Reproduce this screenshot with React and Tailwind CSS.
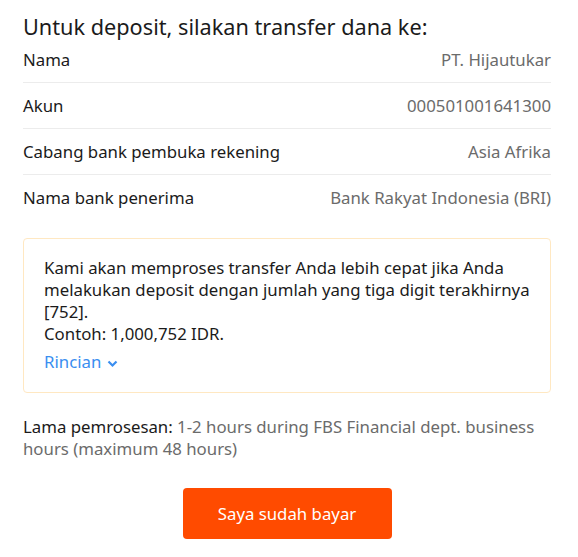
import React from 'react';

const ROWS = [
  { label: 'Nama', value: 'PT. Hijautukar' },
  { label: 'Akun', value: '000501001641300' },
  { label: 'Cabang bank pembuka rekening', value: 'Asia Afrika' },
  { label: 'Nama bank penerima', value: 'Bank Rakyat Indonesia (BRI)' },
];

export default function App() {
  return (
    <div className="min-h-[557px] bg-white pl-[23px] pr-[27px] pt-[17px] text-[#1b1b1b]" style={{ fontFamily: '"Noto Sans", "Open Sans", sans-serif' }}>
      {/* Title */}
      <h2 className="text-[21.7px] leading-[20px]">Untuk deposit, silakan transfer dana ke:</h2>

      {/* Bank details */}
      <div>
        {ROWS.map((row, i) => (
          <div
            key={row.label}
            className={`flex items-center justify-between h-[46px] text-[16.8px] ${i < ROWS.length - 1 ? 'border-b border-[#ececec]' : ''}`}
          >
            <span>{row.label}</span>
            <span className="text-[#6b6b6b]">{row.value}</span>
          </div>
        ))}
      </div>

      {/* Hint box */}
      <div className="mt-[17px] rounded-[4px] border border-[#ffe8c2] pl-[20px] pr-[10px] pt-[18px] pb-[19px] text-[16.8px] leading-[22px]">
        <p>
          Kami akan memproses transfer Anda lebih cepat jika Anda melakukan deposit dengan jumlah yang tiga digit terakhirnya [752].
        </p>
        <p>Contoh: 1,000,752 IDR.</p>
        <button className="mt-[6px] flex items-center gap-[6px] text-[#3a8ef0]">
          Rincian
          <svg width="11" height="8" viewBox="0 0 11 8" className="mt-[3px]">
            <path d="M1.5 1.5 L5.5 5.5 L9.5 1.5" fill="none" stroke="currentColor" strokeWidth="2.2" />
          </svg>
        </button>
      </div>

      {/* Processing time */}
      <p className="mt-[23px] text-[16.8px] leading-[22px] text-[#6b6b6b]">
        <span className="text-[#1b1b1b]">Lama pemrosesan:</span> 1-2 hours during FBS Financial dept. business hours (maximum 48 hours)
      </p>

      {/* Action */}
      <div className="mt-[28px] flex justify-center">
        <button className="h-[51px] w-[209px] rounded-[4px] bg-[#ff4b00] text-[16.8px] text-white">
          Saya sudah bayar
        </button>
      </div>
    </div>
  );
}
